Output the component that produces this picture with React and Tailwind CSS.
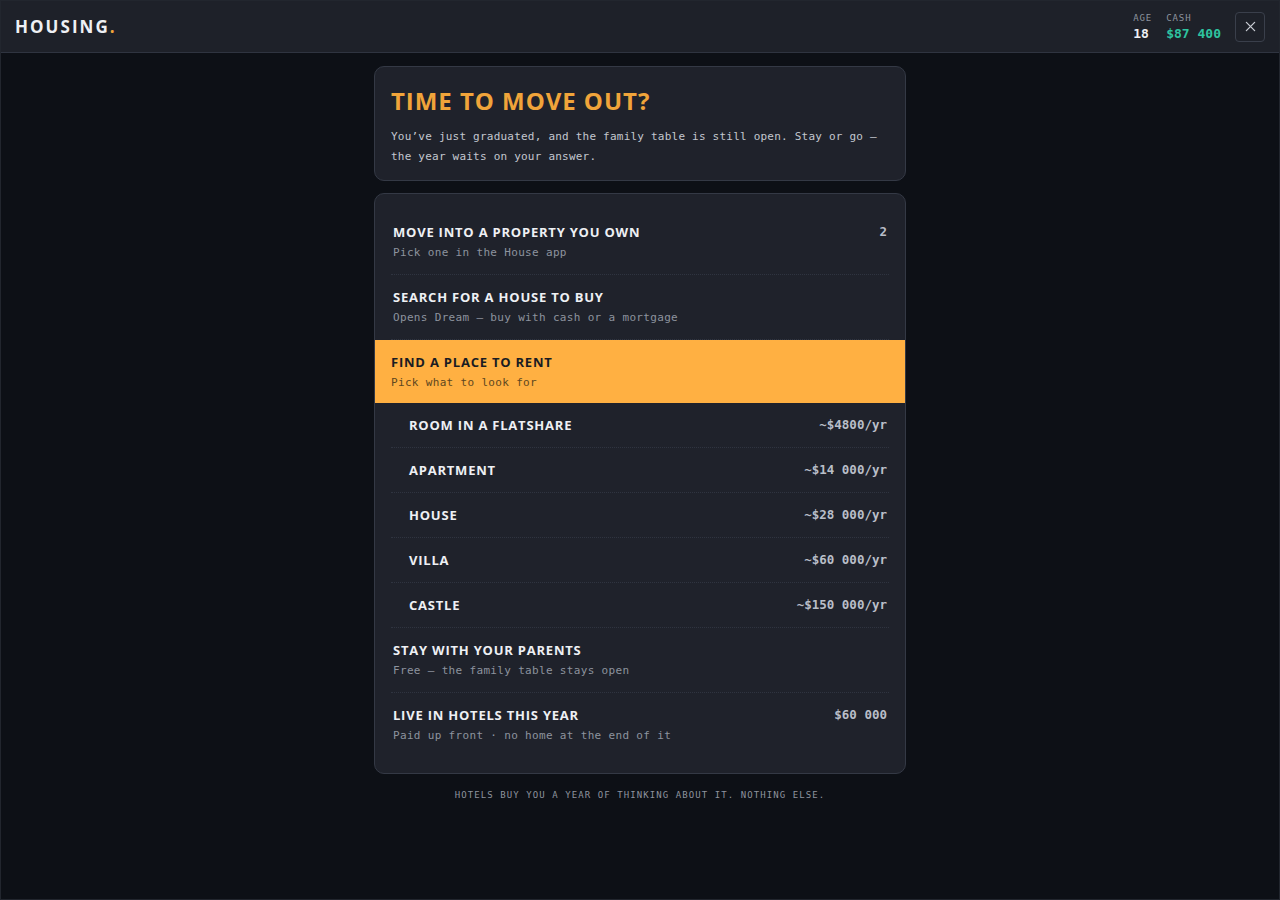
import React from 'react';

const sans = "font-['Open_Sans',sans-serif]";
const mono = "font-['DejaVu_Sans_Mono',monospace]";

const rentals = [
  { name: 'Room in a flatshare', price: '~$4800/yr' },
  { name: 'Apartment', price: '~$14 000/yr' },
  { name: 'House', price: '~$28 000/yr' },
  { name: 'Villa', price: '~$60 000/yr' },
  { name: 'Castle', price: '~$150 000/yr' },
];

function Option({ title, sub, value, last }) {
  return (
    <div className={`flex items-start justify-between px-0.5 pt-[13px] pb-[14px] ${last ? '' : 'border-b border-dotted border-[#2f3440]'}`}>
      <div className="flex flex-col gap-1">
        <div className={`${sans} text-[13px] leading-[18px] font-bold tracking-[0.06em] uppercase text-[#eef0f4]`}>{title}</div>
        <div className={`${mono} text-[11px] leading-[15px] tracking-[0.03em] text-[#8d939e]`}>{sub}</div>
      </div>
      {value && <div className={`${mono} text-[12.5px] leading-[18px] font-bold text-[#b9bec8]`}>{value}</div>}
    </div>
  );
}

export default function App() {
  return (
    <div className="min-h-[900px] bg-[#0d1016] border border-[#22262e] flex flex-col">
      <header className="h-[52px] flex items-center justify-between px-[14px] bg-[#1e2129] border-b border-[#2f3440]">
        <div className={`${sans} text-[17px] font-bold tracking-[0.12em] text-[#eef0f4]`}>
          HOUSING<span className="text-[#f0a43a]">.</span>
        </div>
        <div className="flex items-center">
          <div className={`${mono} flex flex-col mr-[14px]`}>
            <span className="text-[9px] leading-3 mb-[2px] tracking-[0.1em] text-[#8d939e]">AGE</span>
            <span className="text-[13px] leading-4 font-bold text-[#eef0f4]">18</span>
          </div>
          <div className={`${mono} flex flex-col mr-[14px]`}>
            <span className="text-[9px] leading-3 mb-[2px] tracking-[0.1em] text-[#8d939e]">CASH</span>
            <span className="text-[13px] leading-4 font-bold text-[#2ec4a0]">$87 400</span>
          </div>
          <button className="w-[30px] h-[30px] flex items-center justify-center rounded-[4px] border border-[#3a3f4b] text-[#c9cdd4]">
            <svg width="11" height="11" viewBox="0 0 12 12" fill="none" stroke="currentColor" strokeWidth="1.4" strokeLinecap="round">
              <path d="M1.5 1.5l9 9M10.5 1.5l-9 9" />
            </svg>
          </button>
        </div>
      </header>

      <main className="w-[532px] mx-auto pt-[13px] flex flex-col gap-3">
        <section className="bg-[#1f222b] border border-[#343945] rounded-[10px] px-4 pt-4 pb-[13px]">
          <h1 className={`${sans} text-[24px] leading-9 font-bold tracking-[0.04em] text-[#f0a43a]`}>TIME TO MOVE OUT?</h1>
          <p className={`${mono} mt-2 text-[11px] leading-5 tracking-[0.02em] text-[#c3c7cf]`}>
            You’ve just graduated, and the family table is still open. Stay or go — the year waits on your answer.
          </p>
        </section>

        <section className="bg-[#1f222b] border border-[#343945] rounded-[10px] p-4">
          <Option title="Move into a property you own" sub="Pick one in the House app" value="2" />
          <Option title="Search for a house to buy" sub="Opens Dream — buy with cash or a mortgage" />
          <div className="-mx-4 px-4 py-[13px] bg-[#ffb042] flex flex-col gap-1">
            <div className={`${sans} text-[13px] leading-[18px] font-bold tracking-[0.06em] text-[#1a1c22]`}>FIND A PLACE TO RENT</div>
            <div className={`${mono} text-[11px] leading-[15px] tracking-[0.03em] text-[#5e4720]`}>Pick what to look for</div>
          </div>
          {rentals.map((r) => (
            <div key={r.name} className="flex items-center justify-between pl-[18px] pr-0.5 py-[13px] border-b border-dotted border-[#2f3440]">
              <div className={`${sans} text-[13px] leading-[18px] font-bold tracking-[0.06em] uppercase text-[#eef0f4]`}>{r.name}</div>
              <div className={`${mono} text-[12.5px] leading-[18px] font-bold text-[#b9bec8]`}>{r.price}</div>
            </div>
          ))}
          <Option title="Stay with your parents" sub="Free — the family table stays open" />
          <Option title="Live in hotels this year" sub="Paid up front · no home at the end of it" value="$60 000" last />
        </section>

        <p className={`${mono} mt-px text-center text-[9px] leading-4 tracking-[0.12em] text-[#8d939e]`}>
          HOTELS BUY YOU A YEAR OF THINKING ABOUT IT. NOTHING ELSE.
        </p>
      </main>
    </div>
  );
}
